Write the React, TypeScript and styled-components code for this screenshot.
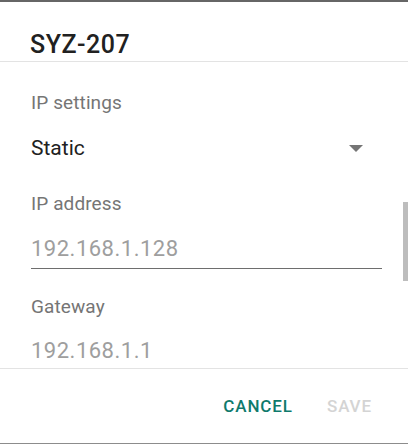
import React from "react";
import styled, { createGlobalStyle } from "styled-components";

const Global = createGlobalStyle`
  html, body { margin: 0; padding: 0; background: #ffffff; }
  body { font-family: Roboto, "Noto Sans", Arial, sans-serif; }
`;

const Dialog = styled.div`
  width: 408px;
  height: 444px;
  box-sizing: border-box;
  border-top: 2px solid #666666;
  border-bottom: 1px solid #8c8c8c;
  background: #ffffff;
  display: flex;
  flex-direction: column;
`;

const Header = styled.div`
  height: 60px;
  box-sizing: border-box;
  padding: 30px 0 0 30px;
  border-bottom: 1px solid #e3e3e3;
`;

const Title = styled.div`
  font-size: 25px;
  line-height: 25px;
  font-weight: 500;
  letter-spacing: 0.5px;
  color: #212121;
`;

const Body = styled.div`
  position: relative;
  height: 306px;
  flex: none;
  overflow: hidden;
  padding: 0 26px 0 30px;
  border-bottom: 1px solid #e3e3e3;
`;

const Scrollbar = styled.div`
  position: absolute;
  right: 0;
  top: 140px;
  width: 5px;
  height: 79px;
  background: #bdbdbd;
`;

const Label = styled.div<{ $gap: number }>`
  margin-top: ${(p) => p.$gap}px;
  margin-left: 1px;
  font-size: 19px;
  line-height: 19px;
  letter-spacing: 0.1px;
  color: #757575;
`;

const SelectRow = styled.div`
  margin-top: 26px;
  display: flex;
  align-items: center;
  justify-content: space-between;
  padding-right: 19px;
`;

const SelectText = styled.div`
  font-size: 21px;
  line-height: 21px;
  margin-left: 1px;
  color: #212121;
`;

const Value = styled.div<{ $gap: number; $underline?: boolean }>`
  margin-top: ${(p) => p.$gap}px;
  margin-left: 1px;
  font-size: 22px;
  line-height: 22px;
  letter-spacing: 0.5px;
  color: #9e9e9e;
  padding-bottom: ${(p) => (p.$underline ? "7.5px" : "0")};
  border-bottom: ${(p) => (p.$underline ? "1px solid #6e6e6e" : "none")};
`;

const Footer = styled.div`
  flex: 1;
  display: flex;
  justify-content: flex-end;
  align-items: flex-start;
  gap: 34px;
  padding: 29px 36px 0 0;
`;

const Button = styled.div<{ $disabled?: boolean }>`
  font-size: 17px;
  line-height: 17px;
  font-weight: 500;
  letter-spacing: 0.9px;
  color: ${(p) => (p.$disabled ? "#d4d4d4" : "#0f7a6c")};
`;

const Arrow = () => (
  <svg width="14" height="7" viewBox="0 0 14 7">
    <polygon points="0,0 14,0 7,7" fill="#757575" />
  </svg>
);

export default function App() {
  return (
    <>
      <Global />
      <Dialog>
        <Header>
          <Title>SYZ-207</Title>
        </Header>
        <Body>
          <Label $gap={31}>IP settings</Label>
          <SelectRow>
            <SelectText>Static</SelectText>
            <Arrow />
          </SelectRow>
          <Label $gap={35}>IP address</Label>
          <Value $gap={25} $underline>192.168.1.128</Value>
          <Label $gap={28.5}>Gateway</Label>
          <Value $gap={24}>192.168.1.1</Value>
          <Scrollbar />
        </Body>
        <Footer>
          <Button>CANCEL</Button>
          <Button $disabled>SAVE</Button>
        </Footer>
      </Dialog>
    </>
  );
}
